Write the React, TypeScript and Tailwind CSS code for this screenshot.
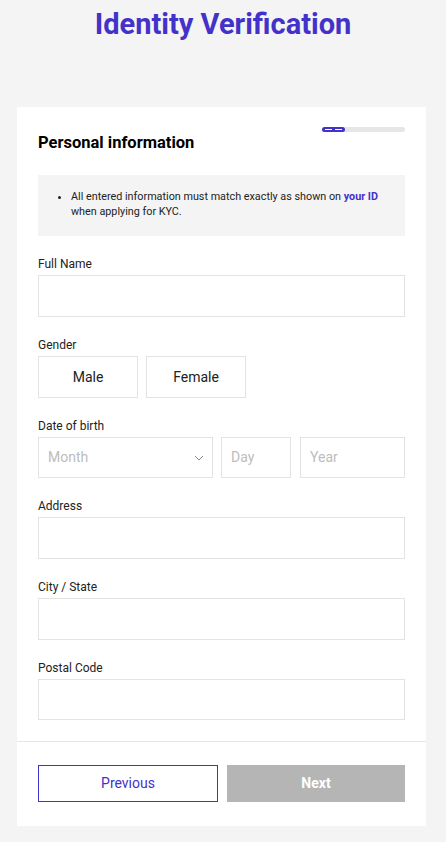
import React from "react";

function Field({ label }: { label: string }) {
  return (
    <div className="mb-[20px]">
      <div className="text-[12px] leading-[16px] text-[#222] mb-[3px]">{label}</div>
      <div className="h-[42px] border border-[#e3e3e3] bg-white" />
    </div>
  );
}

export default function App() {
  return (
    <div
      className="min-h-[842px] bg-[#f4f4f4] pb-[16px]"
      style={{ fontFamily: "Roboto, 'Noto Sans', Arial, sans-serif" }}
    >
      <h1 className="text-center text-[29px] leading-[48px] font-bold text-[#4332c9] pt-0">
        Identity Verification
      </h1>
      <div className="ml-[17px] mr-[20px] mt-[59px] bg-white">
        <div className="px-[21px] pt-[20px]">
          <div className="flex justify-end">
            <div className="relative w-[83px] h-[5px] rounded-full bg-[#e6e6e6]">
              <div className="absolute left-0 top-0 h-[5px] w-[23px] rounded-full bg-[#4332c9] flex items-center justify-center gap-[3px]">
                <div className="w-[7px] h-[1px] bg-white" />
                <div className="w-[7px] h-[1px] bg-white" />
              </div>
            </div>
          </div>
          <h2 className="text-[16.5px] leading-[24px] font-bold text-black mt-[-1px]">
            Personal information
          </h2>
          <div className="mt-[20px] bg-[#f4f4f4] h-[61px] pl-[20px] pr-[8px] pt-[14px]">
            <ul className="list-disc pl-[13px] text-[10.8px] leading-[15px] text-[#222]">
              <li>
                All entered information must match exactly as shown on{" "}
                <span className="font-bold text-[#4332c9]">your ID</span> when applying for KYC.
              </li>
            </ul>
          </div>
          <div className="mt-[20px]">
            <Field label="Full Name" />
            <div className="mb-[20px]">
              <div className="text-[12px] leading-[16px] text-[#222] mb-[3px]">Gender</div>
              <div className="flex gap-[8px]">
                <div className="w-[100px] h-[42px] border border-[#e3e3e3] flex items-center justify-center text-[14px] text-[#222]">
                  Male
                </div>
                <div className="w-[100px] h-[42px] border border-[#e3e3e3] flex items-center justify-center text-[14px] text-[#222]">
                  Female
                </div>
              </div>
            </div>
            <div className="mb-[20px]">
              <div className="text-[12px] leading-[16px] text-[#222] mb-[3px]">Date of birth</div>
              <div className="flex gap-[8px] h-[41px]">
                <div className="w-[175px] border border-[#e3e3e3] flex items-center justify-between pl-[9px] pr-[8px] text-[14px] text-[#bdbdbd]">
                  <span>Month</span>
                  <svg width="10" height="6" viewBox="0 0 10 6" fill="none">
                    <path d="M1 1l4 4 4-4" stroke="#8a8a8a" strokeWidth="1" />
                  </svg>
                </div>
                <div className="w-[70px] border border-[#e3e3e3] flex items-center pl-[9px] text-[14px] text-[#bdbdbd]">
                  Day
                </div>
                <div className="flex-1 ml-[1px] border border-[#e3e3e3] flex items-center pl-[9px] text-[14px] text-[#bdbdbd]">
                  Year
                </div>
              </div>
            </div>
            <Field label="Address" />
            <Field label="City / State" />
            <div>
              <div className="text-[12px] leading-[16px] text-[#222] mb-[3px]">Postal Code</div>
              <div className="h-[41px] border border-[#e3e3e3] bg-white" />
            </div>
          </div>
        </div>
        <div className="mt-[21px] border-t border-[#e6e6e6] px-[21px] pt-[23px] pb-[24px] flex gap-[9px]">
          <button className="flex-1 h-[37px] border border-[#4332c9] text-[#4332c9] text-[14px] bg-white">
            Previous
          </button>
          <button className="flex-1 h-[37px] bg-[#b5b5b5] text-white text-[14px] font-bold">
            Next
          </button>
        </div>
      </div>
    </div>
  );
}
